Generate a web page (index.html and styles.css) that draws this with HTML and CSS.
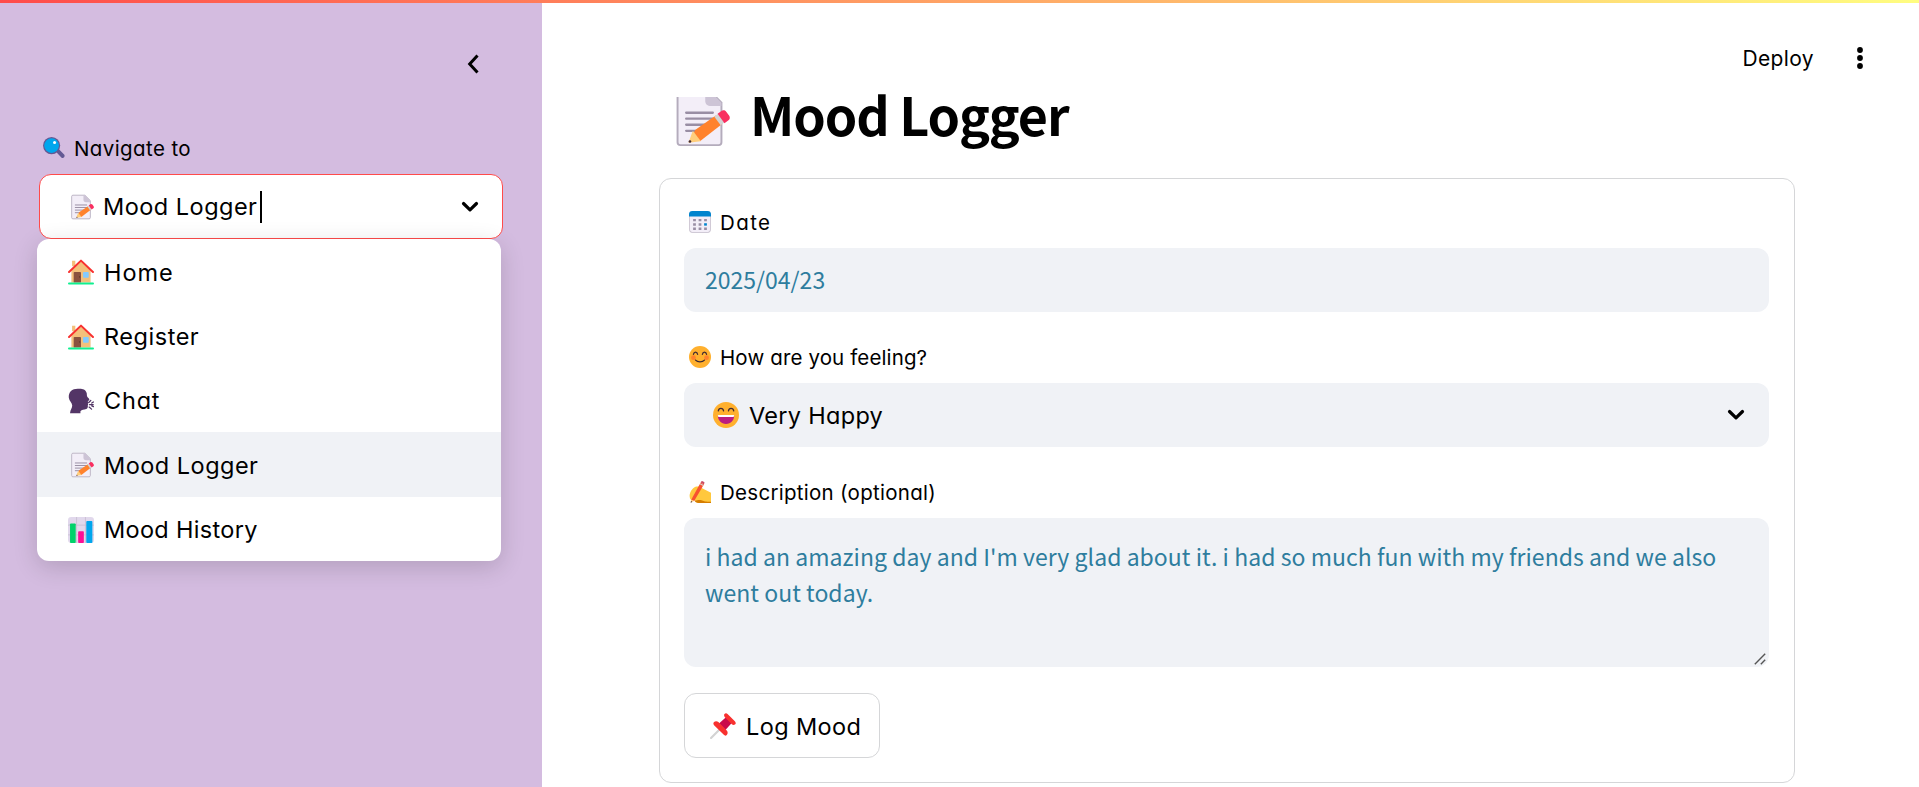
FILE: index.html
```
<!DOCTYPE html>
<html lang="en">
<head>
<meta charset="utf-8">
<title>Mood Logger</title>
<link rel="stylesheet" href="styles.css">
</head>
<body>
<svg class="defs" width="0" height="0" aria-hidden="true">
  <symbol id="memo" viewBox="0 0 32 32">
    <path d="M4 3.2C4 2 4.900 1 6 1h15l7 7v21c0 1.200-.9 2-2 2H6c-1.100 0-2-.8-2-2z" fill="#f3eef8"/>
    <path d="M4.500 3.200c0-1 .6-1.700 1.500-1.700h14.800l6.700 6.700V29c0 1-.6 1.500-1.500 1.500H6c-.9 0-1.500-.5-1.500-1.500z" fill="none" stroke="#b4acbc"/>
    <path d="M19 1.500h2l6.500 6.700V10H22c-1.800 0-3-1-3-2.800z" fill="#cdc4d6"/>
    <path d="M9 13.500h14M9 16.600h14M9 19.800h11M9 23h8" stroke="#998ea4" stroke-width="1.200" stroke-linecap="round"/>
    <path d="M11.500 27.500l2.200-5L24.500 15l3.200 4.600-11.300 8.700z" fill="#ff822d"/>
    <path d="M10.200 29.200l2.300-6.200 4.200 5.400z" fill="#ffce7c"/><circle cx="11" cy="28.600" r=".7" fill="#402a32"/>
    <path d="M23.700 15.500l2.100-1.500 3.400 4.500-2.100 1.500z" fill="#d3d3d3"/>
    <path d="M25.500 14l2-1.400c.8-.6 1.900-.4 2.500.4l1.500 2c.6.800.5 2-.3 2.500l-2.100 1.500z" fill="#f92f60"/>
  </symbol>
  <symbol id="house" viewBox="0 0 32 32">
    <path d="M5 2h4v7H5zM4 14L16 3l12 11v15H4z" fill="#f3c07b"/>
    <path d="M4 15h1v14H4zM27 15h1v14h-1z" fill="#f5dcc0"/>
    <path d="M1.300 16L16 2l14.700 14" fill="none" stroke="#f8312f" stroke-width="2.500" stroke-linecap="round" stroke-linejoin="round"/>
    <path d="M7 17c0-.7.300-1 1-1h7c.7 0 1 .3 1 1v12H7z" fill="#8a523f"/><circle cx="14.300" cy="22" r=".8" fill="#5a3429"/>
    <rect x="18.500" y="16" width="7" height="7" rx="1" fill="#83cbff"/>
    <rect x="0" y="29" width="32" height="2.500" rx="1.200" fill="#0ff090"/>
  </symbol>
  <symbol id="speak" viewBox="0 0 32 32">
    <path d="M1 12C.5 5 5 1 12 1c5-.4 9 0 11 5 .5 3.500 0 4 1.800 6 1.300 1.500 2.400 2.600.4 3.600l-1 .6c1.300 1.300.7 2 .2 2.400l.4 2-.5.900c.5 1.800-.2 3.600-1.800 4.200-3 1.100-5.500.5-7.200 3V31H2.500c.3-4.500 2.800-6.500 2.700-9.500C5 18 1.500 16 1 12z" fill="#533566"/>
    <path d="M26.500 20.500h4.500M25.500 17.800l2.500-2.500M26 23.500l3 2.500M29.300 18.500l1.900-1.200M29.300 22l2 1" stroke="#533566" stroke-width="1.600" stroke-linecap="round"/>
  </symbol>
  <symbol id="chart" viewBox="0 0 32 32">
    <rect width="32" height="32" rx="4" fill="#e1d8ec"/>
    <path d="M10.500 0v32M21.500 0v32M0 10h32M0 22h32" stroke="#c8bdd2" stroke-width="1"/>
    <rect x="2.500" y="8" width="7" height="24" rx="1" fill="#00d26a"/><rect x="12.500" y="17.500" width="7" height="14.500" rx="1" fill="#fc0f96"/><rect x="22.500" y="5" width="7.500" height="27" rx="1" fill="#00a6ed"/>
  </symbol>
  <symbol id="lens" viewBox="0 0 32 32">
    <path d="M19.500 20l3-3 8.200 8.600c1 1 1 2.700 0 4s-2.800 1.400-4 .2l-7.200-7.500z" fill="#635994"/>
    <circle cx="12.500" cy="12.500" r="12.500" fill="#635994"/><circle cx="12.500" cy="12.500" r="10.700" fill="#00a6ed"/>
    <circle cx="16.800" cy="8" r="2.200" fill="#fff"/>
  </symbol>
  <symbol id="calendar" viewBox="0 0 32 32">
    <rect x=".5" y="1" width="31" height="30.500" rx="5" fill="#f3eef8" stroke="#b4acbc"/>
    <path d="M0 8V5a5 5 0 0 1 5-5h22a5 5 0 0 1 5 5v3z" fill="#0084ce"/>
    <path d="M6 11.500h4v3.500H6zM14 11.500h4v3.500h-4zM22 11.500h4v3.500h-4zM6 17.800h4v3.500H6zM14 17.800h4v3.500h-4zM6 24h4v3.500H6zM14 24h4v3.500h-4zM22 24h4v3.500h-4z" fill="#998ea4"/>
    <path d="M22 17.800h4v3.500h-4z" fill="#0084ce"/>
  </symbol>
  <symbol id="smile" viewBox="0 0 32 32">
    <circle cx="16" cy="16" r="16" fill="#ffb02e"/>
    <circle cx="6.500" cy="17" r="3.500" fill="#ff822d"/><circle cx="25.500" cy="17" r="3.500" fill="#ff822d"/>
    <path d="M6.500 12c.7-4 5.300-4 6 0M19.500 12c.7-4 5.300-4 6 0M9.500 20.500c3 3.300 10 3.300 13 0" fill="none" stroke="#402a32" stroke-width="1.900" stroke-linecap="round"/>
  </symbol>
  <symbol id="grin" viewBox="0 0 32 32">
    <circle cx="16" cy="16" r="16" fill="#ffb02e"/>
    <path d="M6.500 10.800c.7-4 5.800-4 6.500 0M19 10.800c.7-4 5.800-4 6.500 0" fill="none" stroke="#402a32" stroke-width="1.600" stroke-linecap="round"/>
    <path d="M6 17c0-.6.400-1 1-1h18c.6 0 1 .4 1 1 0 5.500-4 10-10 10S6 22.500 6 17z" fill="#bb1d80"/><path d="M6.100 16.500c.1-.3.400-.5.900-.5h18c.5 0 .9.200 1 .5l-.6 2H6.600z" fill="#fff"/>
  </symbol>
  <symbol id="hand" viewBox="0 0 32 32">
    <path d="M1 23c-.8-5 3-12 8.500-14.500 3-1.300 6-.6 7.500 1L32 17v15H15c-3 0-5.500-2-6-4l-4 .5C2.500 28 1.300 26 1 23z" fill="#ffc83d"/>
    <path d="M8 28.500c5-.8 7-1.500 10-.5 4 1.300 5 2.400 14 2V32H14c-3 0-5.500-1.500-6-3.500z" fill="#d67d00"/>
    <path d="M3 27.500L17 2.200l4.800 2.500L7.500 29z" fill="#f8512f"/><path d="M17 2.200l1-1.600C18.300 0 19 0 19.700.200L22 1.500c.5.300.7 1 .4 1.600l-1 1.700z" fill="#ca4b62"/><path d="M16 4l4.800 2.600" stroke="#d3d3d3" stroke-width="1.500"/>
    <path d="M3.200 27l-.7 4.400L7.300 29z" fill="#ffce7c"/><path d="M2.900 29.200l-.5 2.500 2.500-1.200z" fill="#402a32"/>
  </symbol>
  <symbol id="pin" viewBox="0 0 32 32">
    <path d="M1.300 30.700L13 19" stroke="#d3d3d3" stroke-width="2.600" stroke-linecap="round"/>
    <path d="M11 13l9-8 7 7-8 9z" fill="#ca0b4a"/>
    <path d="M17.600 1.500c1-1.500 2.800-1.600 4-.4l9 9.100c1.300 1.200 1.600 3.300 0 4.100-1.500.8-3 .1-4-.8l-8-8c-.9-1.200-1.800-2.500-1-4zM5 11.200c1.300-1.500 3.800-1.500 5.300 0L20.600 21.500c1.400 1.400 1.600 4.200 0 5.700-1.300 1.200-2.700.6-3.600-.4L5 15c-1.200-1.200-1.100-2.800 0-3.800z" fill="#f8312f"/>
  </symbol>
  <symbol id="chevron" viewBox="0 0 18 12">
    <path d="M2.500 2.500L9 8.800l6.500-6.300" fill="none" stroke="#000" stroke-width="3.200" stroke-linecap="round" stroke-linejoin="round"/>
  </symbol>
</svg>

<div class="topbar"></div>
<div class="app">
  <aside class="sidebar">
    <div class="collapse"><svg width="12" height="20" viewBox="0 0 12 20"><path d="M10.500 1.500L2.700 10l7.800 8.500" fill="none" stroke="#000" stroke-width="3"/></svg></div>
    <div class="label"><svg class="emoji"><use href="#lens"/></svg><span class="t-nav">Navigate to</span></div>
    <div class="select active">
      <svg class="emoji"><use href="#memo"/></svg><span class="t-mood">Mood Logger</span><i class="caret"></i>
      <svg class="chev"><use href="#chevron"/></svg>
      <ul class="menu">
        <li><svg class="emoji"><use href="#house"/></svg><span class="t-home">Home</span></li>
        <li><svg class="emoji"><use href="#house"/></svg><span class="t-register">Register</span></li>
        <li><svg class="emoji"><use href="#speak"/></svg><span class="t-chat">Chat</span></li>
        <li class="current"><svg class="emoji"><use href="#memo"/></svg><span class="t-mood">Mood Logger</span></li>
        <li><svg class="emoji"><use href="#chart"/></svg><span class="t-history">Mood History</span></li>
      </ul>
    </div>
  </aside>
  <main class="main">
    <header class="header"><span class="t-deploy">Deploy</span><svg class="dots" width="8" height="24" viewBox="0 0 8 24"><circle cx="4" cy="4" r="2.900"/><circle cx="4" cy="12" r="2.900"/><circle cx="4" cy="20" r="2.900"/></svg></header>
    <h1 class="title"><svg class="emoji"><use href="#memo"/></svg><span class="t-title">Mood Logger</span></h1>
    <form class="form">
      <div class="label"><svg class="emoji"><use href="#calendar"/></svg><span class="t-date">Date</span></div>
      <div class="input"><span class="t-value">2025/04/23</span></div>
      <div class="label"><svg class="emoji"><use href="#smile"/></svg><span class="t-feel">How are you feeling?</span></div>
      <div class="select"><svg class="emoji"><use href="#grin"/></svg><span class="t-happy">Very Happy</span><svg class="chev"><use href="#chevron"/></svg></div>
      <div class="label"><svg class="emoji"><use href="#hand"/></svg><span class="t-desc">Description (optional)</span></div>
      <div class="textarea"><span class="t-line">i had an amazing day and I'm very glad about it. i had so much fun with my friends and we also</span><br><span class="t-line">went out today.</span>
        <svg class="grip" width="12" height="12" viewBox="0 0 12 12"><path d="M.8 11.200L11.200.8M6.800 11.200l4.400-4.400" stroke="#555" stroke-width="1.400"/></svg>
      </div>
      <button class="button" type="button"><svg class="emoji"><use href="#pin"/></svg><span class="t-log">Log Mood</span></button>
    </form>
  </main>
</div>
</body>
</html>
```
FILE: styles.css
```
* { box-sizing: border-box; }
body {
  margin: 0;
  height: 787px;
  overflow: hidden;
  background: #fff;
  color: #000;
  font-family: Inter, "Liberation Sans", sans-serif;
  font-feature-settings: "cv11", "ss03";
  font-size: 23.5px;
}
.defs { position: absolute; }
.topbar {
  position: absolute;
  top: 0;
  left: 0;
  right: 0;
  height: 3px;
  background: linear-gradient(90deg, #ff4b4b, #fffd80);
}
.app { display: flex; height: 787px; }
span { white-space: nowrap; }
.t-nav { letter-spacing: .4px; }
.t-mood { letter-spacing: .48px; }
.t-home { letter-spacing: .95px; }
.t-register { letter-spacing: .53px; }
.t-chat { letter-spacing: .8px; }
.t-history { letter-spacing: .32px; }
.t-deploy { letter-spacing: .36px; }
.t-title { letter-spacing: -1.1px; }
.t-date { letter-spacing: 1.4px; }
.t-feel { letter-spacing: .13px; }
.t-happy { letter-spacing: .3px; }
.t-desc { letter-spacing: .28px; }
.t-line { letter-spacing: .04px; }
.t-log { letter-spacing: .38px; }
.emoji { flex: none; width: 26px; height: 26px; }
.sidebar {
  width: 542px;
  flex: none;
  padding: 54px 39px 0;
  background: #d4bce0;
}
.collapse { display: flex; justify-content: flex-end; height: 80px; padding-right: 24px; }
.label {
  display: flex;
  align-items: center;
  gap: 9px;
  height: 28px;
  padding-left: 4px;
  font-size: 20.5px;
}
.label .emoji { width: 22px; height: 22px; }
.label span { padding-top: 1px; }
.select {
  position: relative;
  display: flex;
  align-items: center;
  height: 64px;
  padding-left: 29px;
  border-radius: 12px;
  background: #f0f2f6;
}
.select > .emoji { margin-right: 10px; }
.chev { width: 18px; height: 12px; margin-left: auto; margin-right: 24px; }
.active {
  width: 464px;
  height: 65px;
  margin-top: 12px;
  padding-left: 28px;
  border: 1px solid #ff4b4b;
  background: #fff;
}
.active > .emoji { margin-right: 9px; }
.active > .chev { margin-right: 23px; }
.caret { width: 2px; height: 32px; margin-left: 3px; background: #000; }
.menu {
  position: absolute;
  top: 64px;
  left: -3px;
  width: 464px;
  margin: 0;
  padding: 0;
  list-style: none;
  background: #fff;
  border-radius: 12px;
  overflow: hidden;
  box-shadow: 0 6px 24px rgba(0, 0, 0, .16);
}
.menu li {
  display: flex;
  align-items: center;
  gap: 10px;
  height: 64.4px;
  padding: 2px 0 0 31px;
}
.menu .current { background: #f0f2f6; }
.main { flex: 1; padding-left: 117px; }
.header {
  display: flex;
  align-items: center;
  justify-content: flex-end;
  height: 97px;
  padding: 19px 55px 0 0;
  gap: 42px;
  font-size: 21px;
}
.title {
  display: flex;
  align-items: flex-start;
  height: 81px;
  margin: 0;
  padding-left: 10px;
  gap: 20px;
  font: 600 52px/60px "Noto Sans CJK SC", sans-serif;
}
.title .emoji { width: 61px; height: 61px; margin-top: -10px; clip-path: inset(10px 0 0 0); }
.title span { margin-top: -13px; }
.form {
  width: 1136px;
  height: 605px;
  padding: 29px 25px 0 24px;
  border: 1px solid #d5d6d8;
  border-radius: 12px;
}
.input, .textarea {
  height: 64px;
  padding: 13px 21px;
  border-radius: 12px;
  background: #f0f2f6;
  color: #2e7d9e;
  font: 23px/36px "Noto Sans CJK SC", sans-serif;
}
.form .label { margin-bottom: 12px; padding-left: 5px; }
.input + .label, .select + .label { margin-top: 31px; }
.textarea { position: relative; height: 149px; padding-top: 20px; }
.grip { position: absolute; right: 3px; bottom: 2px; }
.button {
  display: flex;
  align-items: center;
  gap: 10px;
  width: 196px;
  height: 65px;
  margin-top: 26px;
  padding: 1px 0 0 25px;
  border: 1px solid #d5d6d8;
  border-radius: 12px;
  background: #fff;
  font: inherit;
  color: #000;
}
```
